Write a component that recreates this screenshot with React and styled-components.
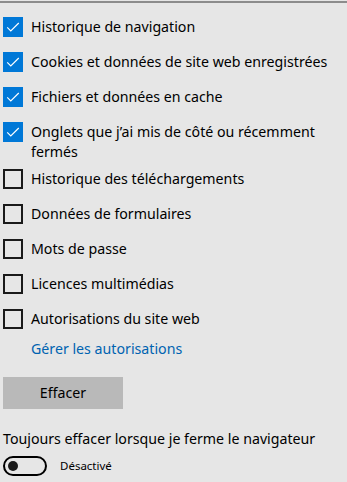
import React from "react";
import styled, { createGlobalStyle } from "styled-components";

const GlobalStyle = createGlobalStyle`
  html, body {
    margin: 0;
    padding: 0;
    background: #e6e6e6;
  }
  body {
    font-family: "Noto Sans", "Open Sans", sans-serif;
    color: #000;
  }
`;

const Panel = styled.div`
  width: 347px;
  height: 482px;
  box-sizing: border-box;
  background: #e6e6e6;
  padding-top: 1px;
  overflow: hidden;
`;

const TopRule = styled.div`
  height: 2px;
  background: #8c8c8c;
`;

const List = styled.div`
  padding: 6px 12px 0 3px;
`;

const Row = styled.label`
  display: flex;
  align-items: flex-start;
  gap: 8px;
`;

const Box = styled.span`
  flex: none;
  width: 20px;
  height: 20px;
  margin: 7.5px 0;
  box-sizing: border-box;
  display: flex;
  align-items: center;
  justify-content: center;
  background: ${({ $checked }) => ($checked ? "#0078d7" : "transparent")};
  border: 2px solid ${({ $checked }) => ($checked ? "#0078d7" : "#1a1a1a")};
`;

const RowText = styled.span`
  padding-top: 7.5px;
  font-size: 14.2px;
  line-height: 20px;
`;

const Link = styled.a`
  display: block;
  margin: 2px 0 0 31px;
  font-size: 14.2px;
  line-height: 20px;
  color: #0063b1;
  text-decoration: none;
`;

const Button = styled.button`
  display: block;
  margin: 18px 0 0 3px;
  width: 120px;
  height: 32px;
  border: none;
  background: #b9b9b9;
  font-family: inherit;
  font-size: 14.2px;
  color: #000;
  padding: 0;
`;

const Caption = styled.div`
  margin: 20px 0 0 3px;
  font-size: 14.2px;
  line-height: 20px;
`;

const SwitchRow = styled.div`
  display: flex;
  align-items: center;
  gap: 13px;
  margin: 7px 0 0 3px;
`;

const Track = styled.span`
  width: 44px;
  height: 20px;
  box-sizing: border-box;
  border: 2px solid #000;
  border-radius: 10px;
  display: flex;
  align-items: center;
  padding-left: 3px;
`;

const Knob = styled.span`
  width: 10px;
  height: 10px;
  border-radius: 50%;
  background: #1a1a1a;
`;

const SwitchLabel = styled.span`
  font-size: 11.5px;
`;

const Check = () => (
  <svg width="18" height="18" viewBox="0 0 18 18">
    <path d="M2.5 9.5 L6.5 13.5 L15.5 4.5" fill="none" stroke="#fff" strokeWidth="1.3" />
  </svg>
);

const items = [
  ["Historique de navigation", true],
  ["Cookies et données de site web enregistrées", true],
  ["Fichiers et données en cache", true],
  ["Onglets que j’ai mis de côté ou récemment fermés", true],
  ["Historique des téléchargements", false],
  ["Données de formulaires", false],
  ["Mots de passe", false],
  ["Licences multimédias", false],
  ["Autorisations du site web", false],
];

export default function App() {
  return (
    <Panel>
      <GlobalStyle />
      <TopRule />
      <List>
        {items.map(([label, checked]) => (
          <Row key={label}>
            <Box $checked={checked}>{checked && <Check />}</Box>
            <RowText>{label}</RowText>
          </Row>
        ))}
      </List>
      <Link href="#">Gérer les autorisations</Link>
      <Button>Effacer</Button>
      <Caption>Toujours effacer lorsque je ferme le navigateur</Caption>
      <SwitchRow>
        <Track>
          <Knob />
        </Track>
        <SwitchLabel>Désactivé</SwitchLabel>
      </SwitchRow>
    </Panel>
  );
}
